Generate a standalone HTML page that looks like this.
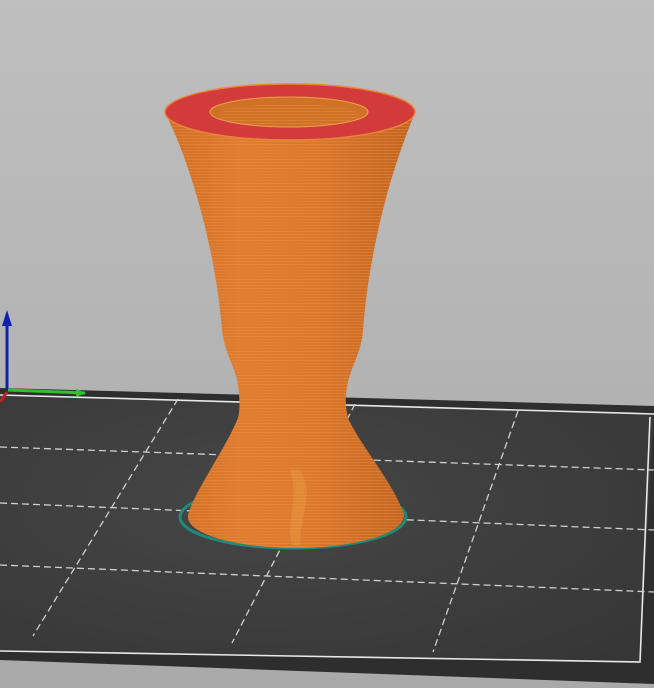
<!DOCTYPE html>
<html><head><style>
html,body{margin:0;padding:0;width:654px;height:688px;overflow:hidden;background:#b5b5b5}
</style></head><body>
<svg width="654" height="688" viewBox="0 0 654 688" xmlns="http://www.w3.org/2000/svg">
<defs>
<linearGradient id="bg" x1="0" y1="0" x2="0" y2="1">
<stop offset="0" stop-color="#bfbfbf"/><stop offset="1" stop-color="#a9a9a9"/>
</linearGradient>
<radialGradient id="bed" cx="0.4" cy="0.4" r="0.8">
<stop offset="0" stop-color="#464646"/><stop offset="1" stop-color="#363636"/>
</radialGradient>
<linearGradient id="vase" x1="0" y1="0" x2="1" y2="0">
<stop offset="0" stop-color="#d06e26"/><stop offset="0.3" stop-color="#e07c30"/><stop offset="0.6" stop-color="#dc782c"/><stop offset="1" stop-color="#c26422"/>
</linearGradient>
<pattern id="rings" width="4" height="3" patternUnits="userSpaceOnUse">
<rect width="4" height="1" fill="#f0a050" opacity="0.3"/>
</pattern>
</defs>
<rect width="654" height="688" fill="url(#bg)"/>
<polygon points="0,388 654,406 654,684 0,660" fill="#2e2e2e"/>
<polygon points="0,395 654,414 640,662 0,651" fill="url(#bed)"/>
<g stroke="#e8e8e8" stroke-width="1.6" fill="none">
<polyline points="0,395 654,414"/>
<polyline points="650,417 640,662 0,651"/>
</g>
<g stroke="#d0d0d0" stroke-width="1.3" stroke-dasharray="7,4" fill="none">
<line x1="178" y1="399" x2="33" y2="636"/>
<line x1="355" y1="404" x2="232" y2="643"/>
<line x1="518" y1="411" x2="433" y2="652"/>
<line x1="0" y1="447" x2="654" y2="470"/>
<line x1="0" y1="503" x2="654" y2="530"/>
<line x1="0" y1="565" x2="654" y2="592"/>
</g>
<line x1="7" y1="390" x2="7" y2="322" stroke="#1020b0" stroke-width="3"/>
<polygon points="7,310 2,326 12,326" fill="#1020b0"/>
<line x1="8" y1="390" x2="85" y2="393" stroke="#30c030" stroke-width="3"/>
<polygon points="86,393 76,389 76,397" fill="#30c030"/>
<line x1="7" y1="392" x2="0" y2="402" stroke="#c02020" stroke-width="3"/>
<ellipse cx="293" cy="517" rx="113" ry="31" fill="none" stroke="#1f8a78" stroke-width="3"/>
<path id="b" d="M165,113 C185,150 215,240 222,330 C225,355 236,368 238,385 C240,400 240,410 238,418 C225,450 195,490 188,515 C185,535 240,548 295,548 C350,548 405,535 404,515 C395,485 360,445 348,418 C345,405 345,395 348,382 C352,365 362,350 363,330 C370,240 395,160 415,113 Z" fill="url(#vase)"/>
<path d="M165,113 C185,150 215,240 222,330 C225,355 236,368 238,385 C240,400 240,410 238,418 C225,450 195,490 188,515 C185,535 240,548 295,548 C350,548 405,535 404,515 C395,485 360,445 348,418 C345,405 345,395 348,382 C352,365 362,350 363,330 C370,240 395,160 415,113 Z" fill="url(#rings)"/>
<path d="M290,470 C300,500 285,520 292,545 L300,545 C300,515 315,495 300,470 Z" fill="#e9a23e" opacity="0.4"/>
<ellipse cx="290" cy="112" rx="125" ry="28" fill="#d33a3a" stroke="#e8853a" stroke-width="1.5"/>
<ellipse cx="289" cy="112" rx="79" ry="15" fill="#d07226" stroke="#eea050" stroke-width="1"/>
<ellipse cx="289" cy="115" rx="70" ry="11" fill="url(#rings)"/>
</svg>
</body></html>
